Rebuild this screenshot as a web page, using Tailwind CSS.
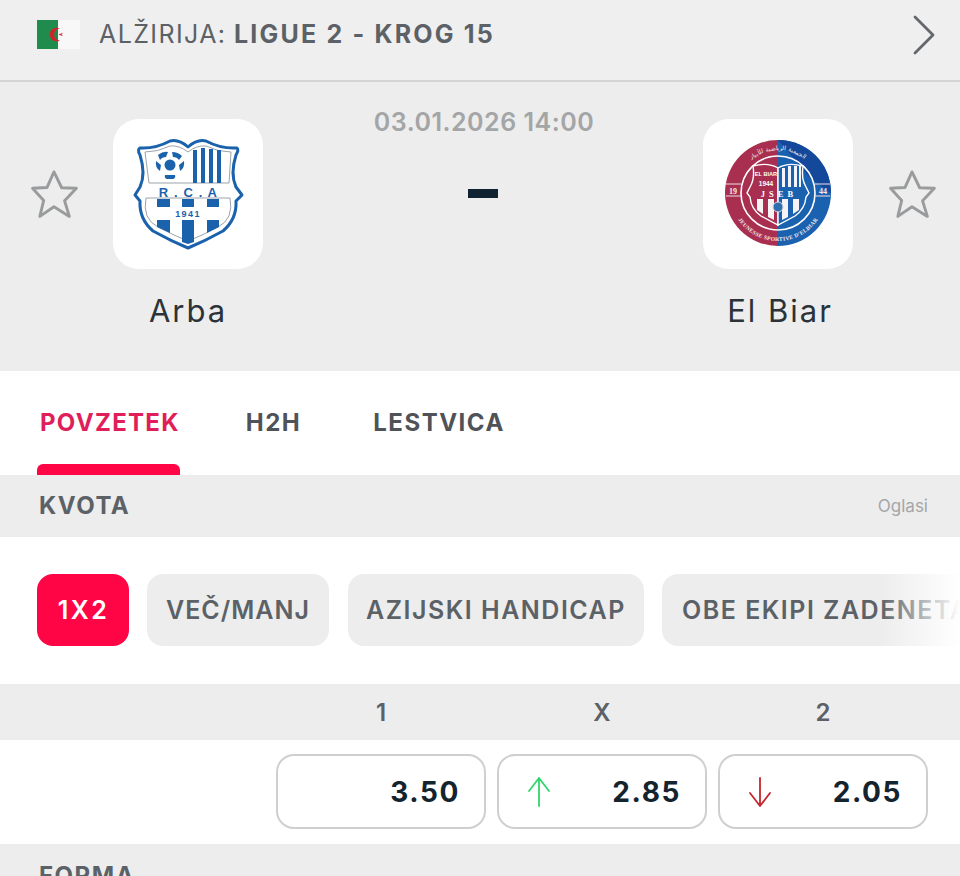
<!DOCTYPE html>
<html lang="sl">

<head>
  <meta charset="UTF-8" />
  <meta name="viewport" content="width=device-width, initial-scale=1.0" />
  <script src="https://cdn.jsdelivr.net/npm/@tailwindcss/browser@4"></script>
  <title>Arba - El Biar</title>
</head>

<body class="bg-white font-['Inter',sans-serif]">
  <div class="w-[960px] h-[876px] overflow-hidden">

    <!-- league bar -->
    <div class="h-[82px] bg-[#efefef] border-b-2 border-[#d4d4d4] flex items-center pl-[37px] pr-[24px]">
      <svg class="w-[43px] h-[29px] mb-[12px]" viewBox="0 0 43 29">
        <rect width="43" height="29" fill="#f8f8f8" />
        <rect width="21" height="29" fill="#1f8c4e" />
        <path d="M23 8.6 A6.8 6.8 0 1 0 23 20.4 A5.4 5.4 0 1 1 23 8.6Z" fill="#d2232a" />
        <path d="M21.5 14.5 L26 12.8 L24.6 14.5 L26 16.2Z" fill="#d2232a" />
      </svg>
      <div class="ml-[19px] mb-[11px] text-[25px] leading-none tracking-[1.4px] text-[#5b6166] whitespace-nowrap">ALŽIRIJA: <span class="font-bold tracking-[2.2px] -ml-[1px]">LIGUE 2 - KROG 15</span></div>
      <svg class="ml-auto mb-[11px] w-[24px] h-[40px]" viewBox="0 0 24 40" fill="none" stroke="#63676b" stroke-width="2.8" stroke-linecap="round" stroke-linejoin="round">
        <path d="M3 2 L21 20 L3 38" />
      </svg>
    </div>

    <!-- match header -->
    <div class="h-[289px] bg-[#ededed] relative flex items-start">
      <div class="w-[110px] h-full flex justify-end pt-[87px] pr-[32px]">
        <svg class="w-[49px] h-[50px] shrink-0" viewBox="0 0 49 52" fill="none" stroke="#999b9c" stroke-width="3" stroke-linejoin="round">
          <path d="M25 3 L33 19.5 L48.3 20 L36 33 L41 49.3 L25 39.3 L10.3 49.3 L14.3 32.7 L2.7 20 L17.7 19.3 Z" />
        </svg>
      </div>

      <div class="w-[156px] flex flex-col items-center pt-[37px]">
        <div class="w-[150px] h-[150px] bg-white rounded-[26px]">
          <svg class="w-[150px] h-[150px]" viewBox="0 0 150 150">
            <path d="M75 28 Q66 20 57 22 Q42 30 27 29 Q24 31 27 36 Q33 55 27 68 L22 76 L27 82 Q26 100 40 112 Q58 122 75 129 Q92 122 110 112 Q124 100 123 82 L129 76 L123 68 Q117 55 123 36 Q126 31 124 29 Q108 30 93 22 Q84 20 75 28Z" fill="#fff" stroke="#1b62ac" stroke-width="3" stroke-linejoin="round" />
            <path d="M32 33 Q45 33 57 27 Q66 26 75 33 Q84 26 93 27 Q105 33 118 33 L116 64 L36 64Z" fill="none" stroke="#9aa3ab" stroke-width="1" />
            <path d="M33 79 L117 79 Q121 100 105 108 Q90 116 75 122 Q60 116 45 108 Q29 100 33 79Z" fill="none" stroke="#9aa3ab" stroke-width="1" />
            <circle cx="57" cy="46" r="5.5" fill="#1b62ac" />
            <path d="M45 36 Q50 32 55 33 L53 38 Q49 38 47 41Z M59 33 Q65 33 69 37 L66 41 Q64 38 60 38Z M43 42 L48 46 L47 52 Q42 49 43 42Z M71 42 Q72 49 67 52 L66 46Z M52 56 L62 56 Q63 59 60 60 L54 60 Q51 59 52 56Z" fill="#1b62ac" />
            <path d="M80 31 H84 V64 H80Z M88 29 H92 V64 H88Z M96 30 H100 V64 H96Z M104 31 H108 V64 H104Z" fill="#1b62ac" />
            <text x="75.5" y="77.5" text-anchor="middle" font-family="Liberation Sans, sans-serif" font-weight="700" font-size="13" letter-spacing="1.1" fill="#1b62ac">R . C . A</text>
            <text x="75" y="97.5" text-anchor="middle" font-family="Liberation Sans, sans-serif" font-weight="700" font-size="9" letter-spacing="1.4" fill="#1b62ac">1941</text>
            <path d="M44 80 H57 V88 H44Z M69 80 H81 V88 H69Z M94 80 H106 V88 H94Z M44 101 H57 V114 L44 108Z M69 101 H81 V123 L75 125 L69 123Z M94 101 H106 V108 L94 114Z" fill="#1b62ac" />
          </svg>
        </div>
        <div class="mt-[24px] text-[31px] leading-[36px] tracking-[2px] text-[#2b3238]">Arba</div>
      </div>

      <div class="flex-1 flex flex-col items-center pt-[25px] pl-[2px]">
        <div class="text-[25px] leading-[30px] font-semibold tracking-[0.5px] text-[#a3a5a7]">03.01.2026 14:00</div>
        <div class="mt-[52px] mr-[2px] w-[30px] h-[9px] bg-[#0f2430]"></div>
      </div>

      <div class="w-[156px] flex flex-col items-center pt-[37px]">
        <div class="w-[150px] h-[150px] bg-white rounded-[26px]">
          <svg class="w-[150px] h-[150px]" viewBox="0 0 150 150">
            <defs>
              <path id="topArc" d="M32 74 A43 43 0 0 1 118 74" />
              <path id="botArc" d="M27 74 A48 48 0 0 0 123 74" />
            </defs>
            <path d="M75 21 A53 53 0 0 0 75 127Z" fill="#a82f50" />
            <path d="M75 21 A53 53 0 0 1 75 127Z" fill="#1a62b0" />
            <path d="M75 21 A53 53 0 0 1 116 40 A53 53 0 0 1 128 74 L108 60Z" fill="#14489a" />
            <text font-family="Liberation Serif, serif" font-size="6" fill="#f5e9ea" letter-spacing="0.3">
              <textPath href="#topArc" startOffset="50%" text-anchor="middle">الجمعية الرياضية للأبيار</textPath>
            </text>
            <text font-family="Liberation Serif, serif" font-weight="700" font-size="5.6" fill="#f5e9ea" letter-spacing="0.3">
              <textPath href="#botArc" startOffset="50%" text-anchor="middle">JEUNESSE SPORTIVE D'ELBIAR</textPath>
            </text>
            <circle cx="75" cy="74" r="37" fill="none" stroke="#fff" stroke-width="1.6" />
            <path d="M23 65 H38 M23 77 H38 M112 65 H127 M112 77 H127" stroke="#f1dfe3" stroke-width="1" />
            <text x="30" y="75" text-anchor="middle" font-family="Liberation Serif, serif" font-weight="700" font-size="8" fill="#f5e9ea">19</text>
            <text x="120" y="75" text-anchor="middle" font-family="Liberation Serif, serif" font-weight="700" font-size="8" fill="#f5e9ea">44</text>
            <path d="M75 49 Q65 43 50 47 Q52 60 47 68 L44 74 L47 78 Q48 90 58 97 L75 106Z" fill="#a82f50" stroke="#fff" stroke-width="1.4" />
            <path d="M75 49 Q85 43 100 47 Q98 60 103 68 L106 74 L103 78 Q102 90 92 97 L75 106Z" fill="#1a62b0" stroke="#fff" stroke-width="1.4" />
            <path d="M79 49 H82 V68 H79Z M85 47 H88 V68 H85Z M91 47 H94 V68 H91Z M96 47 H98 V68 H96Z" fill="#f3f5fa" />
            <text x="63" y="57" text-anchor="middle" font-family="Liberation Sans, sans-serif" font-weight="700" font-size="5.6" fill="#fff">EL BIAR</text>
            <text x="63" y="67" text-anchor="middle" font-family="Liberation Sans, sans-serif" font-weight="700" font-size="6.5" fill="#fff">1944</text>
            <text x="76" y="78" text-anchor="middle" font-family="Liberation Serif, serif" font-weight="700" font-size="8.5" letter-spacing="4" fill="#fff">JSEB</text>
            <path d="M54 80 H60 V95 L54 91Z M65 80 H71 V101 L65 98Z M79 80 H85 V98 L79 101Z M90 80 H96 V91 L90 95Z" fill="#f7f3f4" />
            <circle cx="75" cy="88" r="5" fill="#2f6eae" stroke="#cfd8e4" stroke-width="1" />
          </svg>
        </div>
        <div class="mt-[24px] text-[31px] leading-[36px] tracking-[2px] text-[#2b3238] pl-[4px]">El Biar</div>
      </div>

      <div class="w-[104px] h-full flex justify-start pt-[87px] pl-[31px]">
        <svg class="w-[49px] h-[50px] shrink-0" viewBox="0 0 49 52" fill="none" stroke="#999b9c" stroke-width="3" stroke-linejoin="round">
          <path d="M25 3 L33 19.5 L48.3 20 L36 33 L41 49.3 L25 39.3 L10.3 49.3 L14.3 32.7 L2.7 20 L17.7 19.3 Z" />
        </svg>
      </div>
    </div>

    <!-- tabs -->
    <div class="h-[104px] bg-white flex pl-[37px] gap-[68px] text-[24px] font-bold tracking-[1.5px] text-[#4f5358]">
      <div class="relative h-full pt-[34px] pl-[3px] tracking-[1.3px] text-[#e01e5a]">
        <span class="leading-[34px]">POVZETEK</span>
        <div class="absolute left-0 right-0 bottom-0 h-[11px] bg-[#ff0546] rounded-t-[6px]"></div>
      </div>
      <div class="pt-[34px] -ml-[2px]"><span class="leading-[34px]">H2H</span></div>
      <div class="pt-[34px] ml-[4px]"><span class="leading-[34px]">LESTVICA</span></div>
    </div>

    <!-- odds title -->
    <div class="h-[62px] bg-[#ededed] flex items-center justify-between pl-[39px] pr-[32px]">
      <span class="text-[24px] font-bold tracking-[1.5px] text-[#5b6166]">KVOTA</span>
      <span class="text-[17px] pt-[2px] text-[#a3a6a8]">Oglasi</span>
    </div>

    <!-- market chips -->
    <div class="h-[147px] bg-white relative overflow-hidden flex items-start pt-[37px] pl-[37px] gap-[18px] text-[25px] font-semibold tracking-[1.5px] text-[#5b6166] whitespace-nowrap">
      <div class="h-[72px] w-[92px] shrink-0 pt-[2px] pl-[1px] rounded-[16px] bg-[#ff0546] text-white tracking-[2.5px] flex items-center justify-center">1X2</div>
      <div class="h-[72px] w-[182px] shrink-0 pt-[2px] rounded-[16px] bg-[#ededed] tracking-[1px] flex items-center justify-center">VEČ/MANJ</div>
      <div class="h-[72px] w-[296px] shrink-0 pt-[2px] ml-[1px] rounded-[16px] bg-[#ededed] flex items-center justify-center">AZIJSKI HANDICAP</div>
      <div class="h-[72px] shrink-0 pt-[2px] rounded-[16px] bg-[#ededed] flex items-center px-[20px]">OBE EKIPI ZADENETA</div>
      <div class="absolute right-0 top-0 bottom-0 w-[80px] bg-gradient-to-r from-white/0 to-white"></div>
    </div>

    <!-- odds column titles -->
    <div class="h-[56px] bg-[#ededed] flex justify-end pr-[32px] gap-[11px] pt-[1px] text-[24px] font-semibold text-[#5b6166]">
      <div class="w-[210px] flex items-center justify-center">1</div>
      <div class="w-[210px] flex items-center justify-center">X</div>
      <div class="w-[210px] flex items-center justify-center">2</div>
    </div>

    <!-- odds -->
    <div class="h-[104px] bg-white flex justify-end items-start pt-[14px] pr-[32px] gap-[11px] text-[28px] font-bold tracking-[1.6px] text-[#14242e]">
      <div class="w-[210px] h-[75px] border-2 border-[#cfcfcf] rounded-[18px] flex items-center justify-end pr-[24px]">3.50</div>
      <div class="w-[210px] h-[75px] border-2 border-[#cfcfcf] rounded-[18px] flex items-center justify-between pl-[26px] pr-[24px]">
        <svg class="w-[28px] h-[32px]" viewBox="0 0 28 32" fill="none" stroke="#2fd66b" stroke-width="1.8" stroke-linecap="round" stroke-linejoin="round">
          <path d="M14 30 V2 M4 15 L14 2 L24 15" />
        </svg>
        <span>2.85</span>
      </div>
      <div class="w-[210px] h-[75px] border-2 border-[#cfcfcf] rounded-[18px] flex items-center justify-between pl-[26px] pr-[24px]">
        <svg class="w-[28px] h-[32px]" viewBox="0 0 28 32" fill="none" stroke="#c4262e" stroke-width="1.8" stroke-linecap="round" stroke-linejoin="round">
          <path d="M14 2 V30 M4 17 L14 30 L24 17" />
        </svg>
        <span>2.05</span>
      </div>
    </div>

    <!-- form section, cut off by the screen edge -->
    <div class="h-[62px] bg-[#ededed] pl-[39px] pt-[17px] text-[24px] leading-[30px] font-bold tracking-[1.5px] text-[#5b6166]">FORMA</div>
  </div>
</body>

</html>
